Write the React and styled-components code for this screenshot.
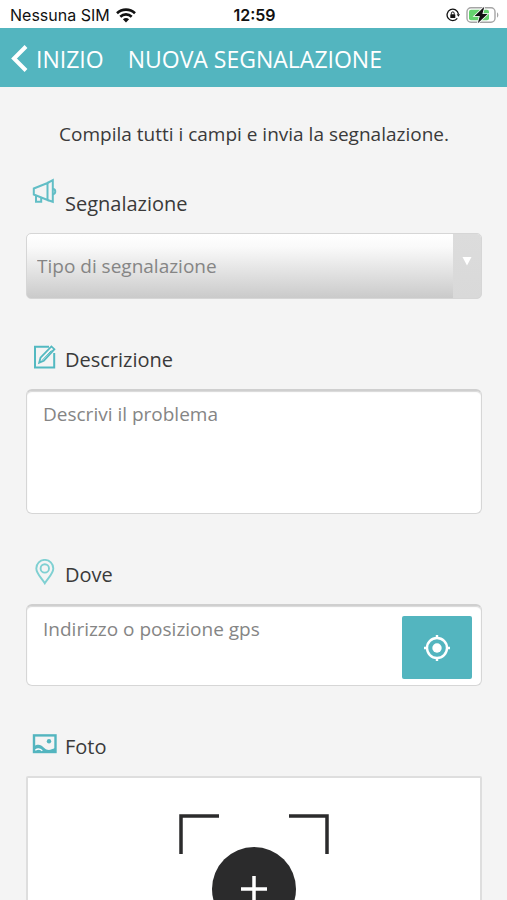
import React from 'react';
import styled, { createGlobalStyle } from 'styled-components';

const GlobalStyle = createGlobalStyle`
    :root {
        --color-primary: #53b5bf;
        --color-page: #f4f4f4;
        --color-text: #3a3a3a;
        --color-muted: #858585;
        --color-border: #d6d6d6;
    }

    * {
        box-sizing: border-box;
    }

    body {
        margin: 0;
        background: var(--color-page);
        color: var(--color-text);
        font-family: "Open Sans", "Noto Sans", sans-serif;
    }
`;

const Screen = styled.div`
    height: 100vh;
    display: flex;
    flex-direction: column;
`;

const StatusBar = styled.div`
    flex: none;
    display: grid;
    grid-template-columns: 1fr auto 1fr;
    align-items: center;
    height: 28px;
    padding: 2px 8px 0 10px;
    background: white;
    color: #111;
    font-family: Inter, "Liberation Sans", sans-serif;
    font-size: 16px;
    line-height: 20px;
`;

const StatusGroup = styled.div`
    display: flex;
    align-items: center;
    justify-content: ${props => props.$end ? "flex-end" : "flex-start"};
    gap: 6px;
`;

const Clock = styled.span`
    font-weight: 600;
`;

const Header = styled.header`
    flex: none;
    display: flex;
    align-items: center;
    gap: 24px;
    height: 59px;
    padding: 2px 11px 0;
    background: var(--color-primary);
    color: white;
    font-size: 23px;
    line-height: 32px;
`;

const BackLink = styled.a`
    display: flex;
    align-items: center;
    gap: 8px;
    color: inherit;
    text-decoration: none;
`;

const Title = styled.h1`
    margin: 0;
    font-size: inherit;
    font-weight: 400;
`;

const Form = styled.form`
    flex: 1;
    min-height: 0;
    overflow-y: auto;
    scrollbar-width: none;
    padding: 33px 25px 48px 26px;
`;

const Intro = styled.p`
    margin: 0 0 30px;
    font-size: 19px;
    line-height: 28px;
    text-align: center;
`;

const Field = styled.div`
    display: flex;
    flex-direction: column;
    gap: 15px;
    margin-bottom: 47px;
`;

const Label = styled.label`
    display: flex;
    align-items: ${props => props.$raised ? "flex-start" : "center"};
    gap: 8px;
    padding-left: 5px;
    font-size: 20px;
    line-height: 28px;

    svg {
        flex: none;
        margin: ${props => props.$raised ? "0" : "-3px 0 3px"};
    }

    span {
        padding-top: ${props => props.$raised ? "12px" : "0"};
    }
`;

const SelectBox = styled.div`
    display: grid;
    grid-template-columns: 1fr 28px;
    height: 66px;
    border: 1px solid var(--color-border);
    border-radius: 5px;
    background: linear-gradient(#fff, #fafafa 20%, #cacaca);
    overflow: hidden;
`;

const Select = styled.select`
    grid-area: 1 / 1 / 2 / 3;
    appearance: none;
    width: 100%;
    padding: 0 40px 0 10px;
    border: 0;
    background: none;
    color: var(--color-muted);
    font: inherit;
    font-size: 19px;
`;

const Arrow = styled.span`
    grid-area: 1 / 2;
    display: flex;
    justify-content: center;
    padding-top: 21px;
    background: linear-gradient(#dcdcdc, #d9d9d9);
    color: white;
    pointer-events: none;
`;

const InputBox = styled.div`
    display: flex;
    align-items: flex-start;
    height: ${props => props.$tall ? "125px" : "82px"};
    padding: 10px 9px 9px;
    border: 1px solid var(--color-border);
    border-top: 2px solid #cfcfcf;
    border-radius: 6px;
    background: white;
    box-shadow: inset 0 1px 1px #d8d8d8;
`;

const TextArea = styled.textarea`
    flex: 1;
    min-width: 0;
    height: 100%;
    padding: 0 7px;
    border: 0;
    background: none;
    resize: none;
    font: inherit;
    font-size: 19px;
    line-height: 26px;
    color: var(--color-text);

    &::placeholder {
        color: var(--color-muted);
        opacity: 1;
    }
`;

const LocateButton = styled.button`
    display: flex;
    align-items: center;
    justify-content: center;
    width: 70px;
    height: 63px;
    padding: 0;
    border: 0;
    border-radius: 2px;
    background: var(--color-primary);
    color: white;
`;

const PhotoButton = styled.button`
    display: flex;
    align-items: center;
    justify-content: center;
    height: 226px;
    padding: 0;
    border: 2px solid #dedede;
    border-radius: 2px;
    background: white;
`;

const WifiIcon = () => (
    <svg width="20" height="15" viewBox="0 0 20 15" fill="none" stroke="#111" strokeWidth="2.6">
        <path d="M1 5.2a13 13 0 0 1 18 0" />
        <path d="M4.3 8.7a8.2 8.2 0 0 1 11.4 0" />
        <path d="M10 14.6 6.9 11.3a4.6 4.6 0 0 1 6.2 0z" fill="#111" stroke="none" />
    </svg>
);

const RotationLockIcon = () => (
    <svg width="14" height="14" viewBox="0 0 14 14" fill="none" stroke="#111" strokeWidth="1.3">
        <path d="M12.4 6A5.7 5.7 0 1 0 11.3 10.4" />
        <path d="M10.7 6.2h3.3l-1.6 2.6z" fill="#111" stroke="none" />
        <rect x="4.3" y="6.3" width="5" height="3.8" rx=".6" fill="#111" stroke="none" />
        <path d="M5.4 6.5V5.3a1.4 1.4 0 0 1 2.8 0v1.2" strokeWidth="1" />
    </svg>
);

const BatteryIcon = () => (
    <svg width="33" height="18" viewBox="0 0 33 18">
        <rect x="1" y="1.7" width="28" height="14.6" rx="4" fill="none" stroke="#a5a5a5" strokeWidth="1.4" />
        <path d="M31 6.5c1.8.6 1.8 4.4 0 5z" fill="#a5a5a5" />
        <rect x="3" y="3.7" width="20" height="10.6" rx="2" fill="#65d36e" />
        <path d="M18.3.8 8.6 10h5.2l-2 7.2L21.6 8h-5.2z" fill="#111" stroke="#fff" strokeWidth="1.6" paintOrder="stroke" />
    </svg>
);

const BackIcon = () => (
    <svg width="17" height="28" viewBox="0 0 17 28" fill="none" stroke="currentColor" strokeWidth="4">
        <path d="M15 1.5 3 13.5l12 12" />
    </svg>
);

const MegaphoneIcon = () => (
    <svg width="26" height="28" viewBox="0 0 26 28" fill="none" stroke="#62bec6" strokeWidth="2">
        <path d="M2.8 10.5 16.5 5v17L2.8 16.5z" />
        <path d="M16.5 5 21.8 2.2v21.6L16.5 22" />
        <path d="M5 17.5v6.2h5.2v-4" />
        <path d="M22 11c3 .2 3 5 0 5.2" />
    </svg>
);

const EditIcon = () => (
    <svg width="26" height="26" viewBox="0 0 26 26" fill="none" stroke="#53b9c1" strokeWidth="2">
        <path d="M18 2.8H4v20.8h19.2V9" />
        <path d="m8.2 18.7 1.3-5L20.4 2.4l3 2.8L12.8 16.8z" strokeWidth="1.8" />
        <path d="m11 16.5 9.4-10" strokeWidth="1" />
    </svg>
);

const PinIcon = () => (
    <svg width="26" height="26" viewBox="0 0 26 26" fill="none" stroke="#7fd0d2" strokeWidth="1.9">
        <path d="M13.8 24.3C11 19.5 5.3 14.5 5.3 9.4a8.5 8.5 0 0 1 17 0c0 5.1-5.7 10.1-8.5 14.9z" />
        <circle cx="13.8" cy="9.4" r="4.2" />
    </svg>
);

const PictureIcon = () => (
    <svg width="26" height="24" viewBox="0 0 26 24" fill="none" stroke="#53b5bf">
        <rect x="3" y="3.4" width="21.5" height="16.6" strokeWidth="2.4" />
        <path d="M3 14.2c4.2-2.4 6.8-1.7 10 1.6 3.2 3.2 6.5 2.5 11 .3v4H3z" fill="#53b5bf" stroke="none" />
        <path d="M4.3 18.2c2.5-1.9 4.5-1.6 7 .5" stroke="#fff" strokeWidth="1.3" />
        <circle cx="18" cy="9.3" r="2.2" fill="#53b5bf" stroke="none" />
    </svg>
);

const ArrowIcon = () => (
    <svg width="10" height="12" viewBox="0 0 10 12">
        <path d="M.5 2h9L5 10.5z" fill="currentColor" />
    </svg>
);

const TargetIcon = () => (
    <svg width="28" height="28" viewBox="0 0 28 28" fill="none" stroke="currentColor">
        <circle cx="14" cy="14" r="10" strokeWidth="2.4" />
        <circle cx="14" cy="14" r="4.7" fill="currentColor" stroke="none" />
        <path d="M14 1v4M14 23v4M1 14h4M23 14h4" strokeWidth="2.4" />
    </svg>
);

const AddPhotoIcon = () => (
    <svg width="150" height="150" viewBox="0 0 150 150" fill="none" stroke="#2b2b2c" strokeWidth="3.5">
        <path d="M2 40V2h38M110 2h38v38M148 110v38h-38M40 148H2v-38" />
        <circle cx="75" cy="75" r="42" fill="#2b2b2c" stroke="none" />
        <path d="M75 62v26M62 75h26" stroke="#fff" />
    </svg>
);

const App = () => {
    return (
        <Screen>
            <GlobalStyle />
            <StatusBar>
                <StatusGroup>
                    <span>Nessuna SIM</span>
                    <WifiIcon />
                </StatusGroup>
                <Clock>12:59</Clock>
                <StatusGroup $end>
                    <RotationLockIcon />
                    <BatteryIcon />
                </StatusGroup>
            </StatusBar>
            <Header>
                <BackLink href="#inizio">
                    <BackIcon />
                    INIZIO
                </BackLink>
                <Title>NUOVA SEGNALAZIONE</Title>
            </Header>
            <Form>
                <Intro>Compila tutti i campi e invia la segnalazione.</Intro>
                <Field>
                    <Label htmlFor="tipo" $raised>
                        <MegaphoneIcon />
                        <span>Segnalazione</span>
                    </Label>
                    <SelectBox>
                        <Select id="tipo">
                            <option>Tipo di segnalazione</option>
                        </Select>
                        <Arrow><ArrowIcon /></Arrow>
                    </SelectBox>
                </Field>
                <Field>
                    <Label htmlFor="descrizione">
                        <EditIcon />
                        <span>Descrizione</span>
                    </Label>
                    <InputBox $tall>
                        <TextArea id="descrizione" placeholder="Descrivi il problema" />
                    </InputBox>
                </Field>
                <Field>
                    <Label htmlFor="dove">
                        <PinIcon />
                        <span>Dove</span>
                    </Label>
                    <InputBox>
                        <TextArea id="dove" placeholder="Indirizzo o posizione gps" />
                        <LocateButton type="button" aria-label="Usa posizione gps">
                            <TargetIcon />
                        </LocateButton>
                    </InputBox>
                </Field>
                <Field>
                    <Label htmlFor="foto">
                        <PictureIcon />
                        <span>Foto</span>
                    </Label>
                    <PhotoButton id="foto" type="button">
                        <AddPhotoIcon />
                    </PhotoButton>
                </Field>
            </Form>
        </Screen>
    )
}

export default App;
